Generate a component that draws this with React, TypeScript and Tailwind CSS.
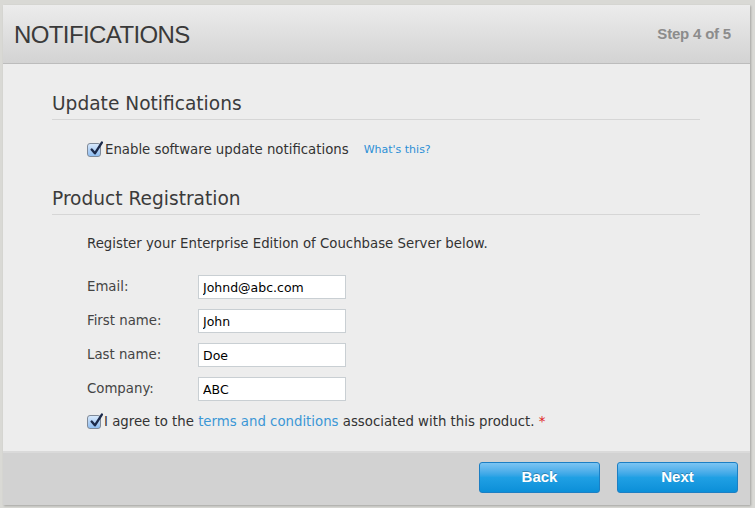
import React from "react";

function Checkbox() {
  return (
    <span className="relative inline-flex h-[14px] w-[14px] shrink-0 items-center justify-center rounded-[3px] border border-[#7f8a99] bg-gradient-to-b from-[#d7e8fb] to-[#8fbdf0]">
      <svg
        viewBox="0 0 14 14"
        className="absolute left-[1px] top-[-3px] h-[15px] w-[15px]"
        fill="none"
      >
        <path
          d="M2.5 8 L5.5 11.5 L12 1.5"
          stroke="#1c2a4a"
          strokeWidth="2.2"
          strokeLinecap="round"
          strokeLinejoin="round"
        />
      </svg>
    </span>
  );
}

const fields = [
  { label: "Email:", value: "Johnd@abc.com" },
  { label: "First name:", value: "John" },
  { label: "Last name:", value: "Doe" },
  { label: "Company:", value: "ABC" },
];

export default function App() {
  return (
    <div className="h-[508px] w-[755px] bg-[#d9d9d5] pl-[3px] pt-[5px]">
      <div className="flex h-[500px] w-[747px] flex-col bg-[#ededed] shadow-[1px_1px_2px_rgba(0,0,0,0.25)]">
        {/* Header */}
        <div className="flex h-[59px] shrink-0 items-center justify-between border-b border-[#bcbcbc] bg-gradient-to-b from-[#ececec] to-[#d3d3d3] pl-[11px] pr-[19px]">
          <h1
            className="pt-[2px] text-[24px] tracking-[-0.6px] text-[#3a3a3a]"
            style={{ fontFamily: '"Liberation Sans", Arial, sans-serif' }}
          >
            NOTIFICATIONS
          </h1>
          <span
            className="text-[15px] font-bold tracking-[-0.2px] text-[#8c8c8c]"
            style={{ fontFamily: '"Liberation Sans", Arial, sans-serif' }}
          >
            Step 4 of 5
          </span>
        </div>

        {/* Body */}
        <div
          className="flex-1 pl-[49px] pr-[50px] pt-[28px] text-[#333]"
          style={{ fontFamily: '"DejaVu Sans", Verdana, sans-serif' }}
        >
          <h2 className="border-b border-[#d6d6d6] pb-[3px] text-[18.6px] leading-[24px] text-[#3b3b3b]">
            Update Notifications
          </h2>
          <div className="mt-[22px] flex items-center pl-[35px] text-[13.3px] leading-[16px]">
            <Checkbox />
            <span className="ml-[4px]">Enable software update notifications</span>
            <span className="ml-[15px] text-[11px] text-[#2b8fd6]">What's this?</span>
          </div>

          <h2 className="mt-[29px] border-b border-[#d6d6d6] pb-[3px] text-[18.6px] leading-[24px] text-[#3b3b3b]">
            Product Registration
          </h2>
          <div className="pl-[35px]">
            <p className="mt-[21px] text-[13.3px] leading-[16px]">
              Register your Enterprise Edition of Couchbase Server below.
            </p>
            <div className="mt-[23px] flex flex-col gap-[10px]">
              {fields.map((f) => (
                <div key={f.label} className="flex items-center text-[13.3px]">
                  <span className="w-[111px] text-[#444]">{f.label}</span>
                  <input
                    readOnly
                    value={f.value}
                    className="h-[24px] w-[148px] border border-[#c9cfd3] bg-white pl-[4px] text-[12.5px] text-black outline-none"
                    style={{ fontFamily: '"DejaVu Sans", Verdana, sans-serif' }}
                  />
                </div>
              ))}
            </div>
            <div className="mt-[12px] flex items-center pt-[1px] text-[13.3px] leading-[16px]">
              <Checkbox />
              <span className="ml-[3px]">
                I agree to the <span className="text-[#3b97d6]">terms and conditions</span>{" "}
                associated with this product. <span className="text-[#e02020]">*</span>
              </span>
            </div>
          </div>
        </div>

        {/* Footer */}
        <div className="flex h-[54px] shrink-0 items-start justify-end gap-[17px] border-t-2 border-[#dadada] bg-[#d2d2d2] pr-[12px] pt-[9px]">
          {["Back", "Next"].map((b) => (
            <button
              key={b}
              className="h-[31px] w-[121px] rounded-[3px] border border-[#1c7fc4] bg-gradient-to-b from-[#7cc4f2] via-[#1fa0e4] to-[#0a8fd8] text-[15px] font-bold text-white [text-shadow:0_-1px_0_rgba(0,0,0,0.25)]"
              style={{ fontFamily: '"Liberation Sans", Arial, sans-serif' }}
            >
              {b}
            </button>
          ))}
        </div>
      </div>
    </div>
  );
}
